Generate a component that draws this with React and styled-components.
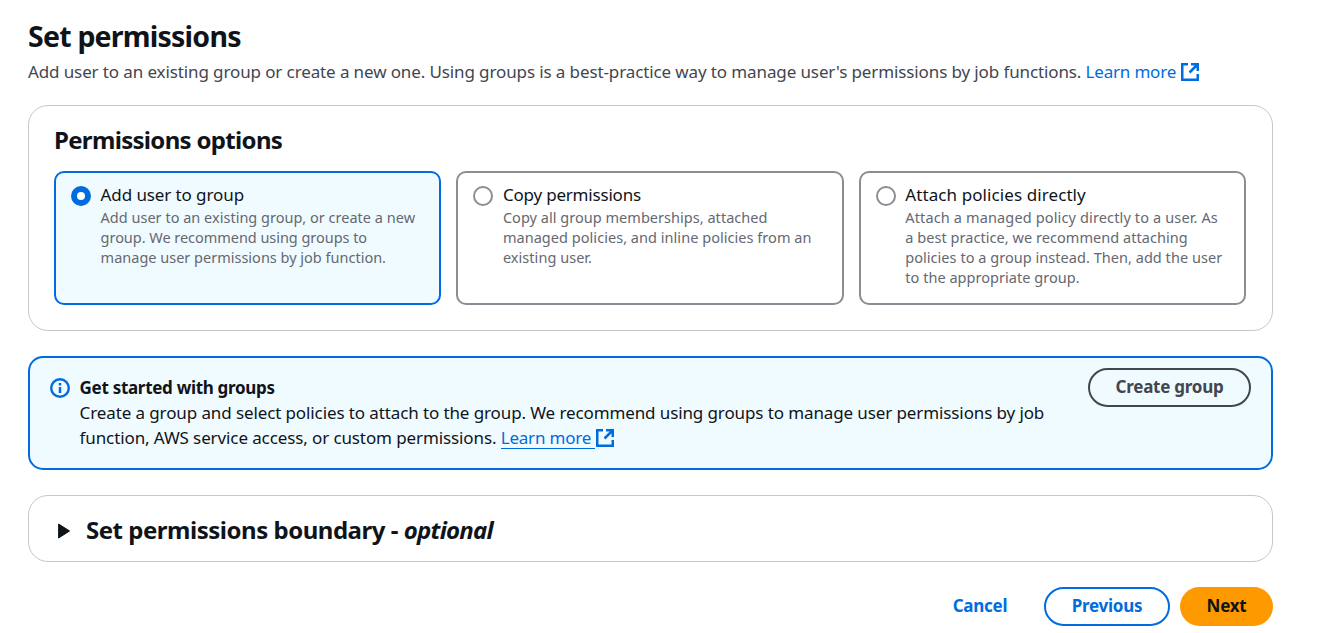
import React from "react";
import styled, { createGlobalStyle } from "styled-components";

const GlobalStyle = createGlobalStyle`
  *, *::before, *::after { box-sizing: border-box; }
  body {
    margin: 0;
    background: #ffffff;
    color: #0f141a;
    font-family: "Noto Sans", "Open Sans", sans-serif;
    font-size: 17.5px;
    line-height: 25px;
    overflow: hidden;
  }
  h1, h2, h3, p { margin: 0; }
`;

const Page = styled.main`
  width: 1273px;
  height: 633px;
  padding: 17px 0 0 28px;
`;

const Title = styled.h1`
  font-size: 28.5px;
  line-height: 38px;
  font-weight: 700;
  letter-spacing: -0.78px;
`;

const Description = styled.p`
  margin-top: 4px;
  color: #424650;
  font-size: 17px;
  line-height: 25px;
  letter-spacing: -0.115px;
  white-space: nowrap;
`;

const Panel = styled.section`
  margin-top: ${(p) => p.$gap};
  height: ${(p) => p.$height};
  border: 1px solid #c6c6cd;
  border-radius: 20px;
  padding: 0 26px 0 25px;
`;

const PanelTitle = styled.h2`
  font-size: 24px;
  line-height: 30px;
  font-weight: 700;
  letter-spacing: ${(p) => p.$track || "-0.68px"};
  white-space: nowrap;
`;

const OptionsTitle = styled(PanelTitle)`
  padding-top: 19px;
  margin-bottom: 16px;
`;

const Tiles = styled.div`
  display: grid;
  grid-template-columns: repeat(3, 1fr);
  gap: 15px;
`;

const Tile = styled.label`
  display: flex;
  gap: 9.6px;
  height: 134px;
  padding: 9px 0 0 15px;
  border: 2px solid ${(p) => (p.$selected ? "#006ce0" : "#8c8c94")};
  border-radius: 10px;
  background: ${(p) => (p.$selected ? "#f0fbff" : "#ffffff")};
`;

const Radio = styled.span`
  flex: none;
  width: 20px;
  height: 20px;
  margin-top: 4px;
  border-radius: 50%;
  border: ${(p) => (p.$selected ? "6px solid #006ce0" : "2px solid #8c8c94")};
  background: #ffffff;
`;

const TileText = styled.div`
  white-space: nowrap;
`;

const TileLabel = styled.div`
  font-size: 17px;
  line-height: 25px;
  letter-spacing: ${(p) => p.$track};
`;

const TileDescription = styled.div`
  color: #656871;
  font-size: 14.5px;
  line-height: 20px;
  letter-spacing: ${(p) => p.$track || "0"};
`;

const Alert = styled.section`
  display: flex;
  align-items: flex-start;
  margin-top: 25px;
  height: 114px;
  padding: 10px 20px 0;
  border: 2px solid #006ce0;
  border-radius: 15px;
  background: #f0fbff;
`;

const AlertBody = styled.div`
  flex: 1;
  padding: 7px 0 0 9.6px;
  font-size: 17px;
  line-height: 25px;
  letter-spacing: -0.11px;
  white-space: nowrap;
`;

const AlertTitle = styled.h3`
  font-size: 17px;
  line-height: 25px;
  font-weight: 700;
  letter-spacing: -0.3px;
`;

const InfoMark = styled.svg`
  flex: none;
  width: 20px;
  height: 20px;
  margin-top: 10px;
`;

const Link = styled.a`
  color: #006ce0;
  display: inline-block;
  line-height: 21px;
  letter-spacing: -0.2px;
  padding-right: 4px;
  border-bottom: 1px solid ${(p) => (p.$underlined ? "#006ce0" : "transparent")};
`;

const ExternalMark = styled.svg`
  width: 20px;
  height: 20px;
  vertical-align: -4px;
`;

const Button = styled.button`
  flex: none;
  width: ${(p) => p.$width};
  height: 39px;
  padding: 0 0 2px;
  border: 2px solid ${(p) => p.$border || "transparent"};
  border-radius: 20px;
  background: ${(p) => p.$fill || "transparent"};
  color: ${(p) => p.$color || "#006ce0"};
  font-family: inherit;
  font-size: 17px;
  line-height: 25px;
  font-weight: 700;
  letter-spacing: -0.25px;
`;

const ExpandHeader = styled.div`
  display: flex;
  align-items: center;
  height: 65px;
  padding: 3px 0 0 2px;
  gap: 15px;
`;

const Caret = styled.svg`
  width: 15px;
  height: 18px;
  flex: none;
`;

const Optional = styled.em`
  letter-spacing: -0.75px;
`;

const Actions = styled.footer`
  display: flex;
  justify-content: flex-end;
  margin-top: 25px;
  gap: 10px;
`;

const ExternalIcon = () => (
  <ExternalMark viewBox="0 0 20 20" fill="none" stroke="#006ce0" strokeWidth="2.5">
    <path d="M8 2.25H2.25v15.5h15.5V12" />
    <path d="M11 2.25h6.75V9M17.25 2.75 9.5 10.5" />
  </ExternalMark>
);

const InfoIcon = () => (
  <InfoMark viewBox="0 0 20 20" fill="none" stroke="#006ce0">
    <circle cx="10" cy="10" r="8.8" strokeWidth="2.4" />
    <path d="M10 5v2.5M10 9v6" strokeWidth="2.5" />
  </InfoMark>
);

const OPTIONS = [
  {
    label: "Add user to group",
    track: "-0.1px",
    lines: [
      { text: "Add user to an existing group, or create a new", track: "0.01px" },
      { text: "group. We recommend using groups to", track: "-0.04px" },
      { text: "manage user permissions by job function." },
    ],
  },
  {
    label: "Copy permissions",
    track: "-0.2px",
    lines: [
      { text: "Copy all group memberships, attached", track: "0.03px" },
      { text: "managed policies, and inline policies from an", track: "0.04px" },
      { text: "existing user.", track: "0.04px" },
    ],
  },
  {
    label: "Attach policies directly",
    track: "0.09px",
    lines: [
      { text: "Attach a managed policy directly to a user. As", track: "0.14px" },
      { text: "a best practice, we recommend attaching", track: "0.05px" },
      { text: "policies to a group instead. Then, add the user", track: "0.04px" },
      { text: "to the appropriate group.", track: "0.04px" },
    ],
  },
];

export default function App() {
  return (
    <>
      <GlobalStyle />
      <Page>
        <Title>Set permissions</Title>
        <Description>
          Add user to an existing group or create a new one. Using groups is a best-practice way to
          manage user's permissions by job functions. <Link>Learn more</Link>
          <ExternalIcon />
        </Description>

        <Panel $gap="21px" $height="226px">
          <OptionsTitle>Permissions options</OptionsTitle>
          <Tiles>
            {OPTIONS.map((option, i) => (
              <Tile key={option.label} $selected={i === 0}>
                <Radio $selected={i === 0} />
                <TileText>
                  <TileLabel $track={option.track}>{option.label}</TileLabel>
                  {option.lines.map((line) => (
                    <TileDescription key={line.text} $track={line.track}>
                      {line.text}
                    </TileDescription>
                  ))}
                </TileText>
              </Tile>
            ))}
          </Tiles>
        </Panel>

        <Alert>
          <InfoIcon />
          <AlertBody>
            <AlertTitle>Get started with groups</AlertTitle>
            Create a group and select policies to attach to the group. We recommend using groups to
            manage user permissions by job
            <br />
            function, AWS service access, or custom permissions. <Link $underlined>Learn more</Link>
            <ExternalIcon />
          </AlertBody>
          <Button $width="163px" $border="#424650" $color="#424650">
            Create group
          </Button>
        </Alert>

        <Panel $gap="25px" $height="67px">
          <ExpandHeader>
            <Caret viewBox="0 0 15 18">
              <path
                d="M2.6 3 13.6 10 2.6 17Z"
                fill="#0f141a"
                stroke="#0f141a"
                strokeLinejoin="round"
              />
            </Caret>
            <PanelTitle $track="-0.48px">
              Set permissions boundary - <Optional>optional</Optional>
            </PanelTitle>
          </ExpandHeader>
        </Panel>

        <Actions>
          <Button $width="108px">Cancel</Button>
          <Button $width="126px" $border="#006ce0">
            Previous
          </Button>
          <Button $width="93px" $fill="#ff9900" $color="#0f141a">
            Next
          </Button>
        </Actions>
      </Page>
    </>
  );
}
